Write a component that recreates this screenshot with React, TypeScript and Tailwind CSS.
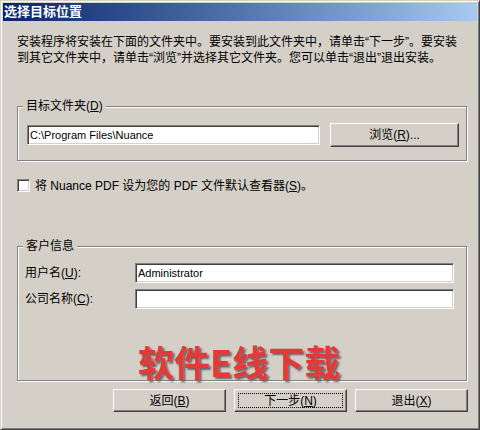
import React from "react";

const font = { fontFamily: '"Liberation Sans", "Noto Sans CJK SC", sans-serif' };

function Sunken({ className = "", children }: { className?: string; children?: React.ReactNode }) {
  return (
    <div
      className={
        "bg-white border border-t-[#808080] border-l-[#808080] border-r-white border-b-white shadow-[inset_1px_1px_0_#404040,inset_-1px_-1px_0_#d4d0c8] " +
        className
      }
    >
      {children}
    </div>
  );
}

function Button({ className = "", focused = false, children }: { className?: string; focused?: boolean; children?: React.ReactNode }) {
  return (
    <div
      className={
        "relative flex items-center justify-center bg-[#d4d0c8] border border-t-white border-l-white border-r-[#404040] border-b-[#404040] shadow-[inset_-1px_-1px_0_#808080] text-[12px] leading-[14px] text-black " +
        className
      }
    >
      {focused && <div className="absolute inset-[3px] border border-dotted border-black" />}
      <span className="relative">{children}</span>
    </div>
  );
}

function GroupBox({ label, className = "", children }: { label: React.ReactNode; className?: string; children?: React.ReactNode }) {
  return (
    <div
      className={
        "relative ml-[14px] w-[450px] border border-[#808080] shadow-[1px_1px_0_#ffffff,inset_1px_1px_0_#ffffff] " +
        className
      }
    >
      <span className="absolute left-[5px] -top-[8px] px-[3px] bg-[#d4d0c8] text-[12px] leading-[14px] text-black whitespace-nowrap">
        {label}
      </span>
      {children}
    </div>
  );
}

export default function App() {
  return (
    <div
      className="relative w-[480px] h-[430px] bg-[#d4d0c8] border border-t-[#d4d0c8] border-l-[#d4d0c8] border-r-[#404040] border-b-[#404040] shadow-[inset_1px_1px_0_#ffffff,inset_-1px_-1px_0_#808080] p-[2px] overflow-hidden"
      style={font}
    >
      {/* Title bar */}
      <div className="h-[18px] bg-gradient-to-r from-[#0a246a] to-[#a6caf0] flex items-center pl-[1px]">
        <span className="text-white font-bold text-[13px] leading-[16px] whitespace-nowrap">选择目标位置</span>
      </div>

      {/* Intro text */}
      <p className="mt-[13px] ml-[14px] text-[12px] leading-[16px] text-black whitespace-nowrap">
        安装程序将安装在下面的文件夹中。要安装到此文件夹中，请单击“下一步”。要安装
        <br />
        到其它文件夹中，请单击“浏览”并选择其它文件夹。您可以单击“退出”退出安装。
      </p>

      {/* Destination folder */}
      <GroupBox
        className="mt-[40px] h-[55px]"
        label={
          <>
            目标文件夹(<span className="underline">D</span>)
          </>
        }
      >
        <div className="flex items-center pl-[9px] pt-[16px]">
          <Sunken className="w-[293px] h-[20px] flex items-center px-[2px]">
            <span className="text-[11px] leading-[14px] text-black whitespace-nowrap">C:\Program Files\Nuance</span>
          </Sunken>
          <Button className="ml-[10px] w-[129px] h-[24px]">
            浏览(<span className="underline">R</span>)...
          </Button>
        </div>
      </GroupBox>

      {/* Checkbox */}
      <div className="mt-[18px] ml-[14px] flex items-center h-[13px]">
        <Sunken className="w-[13px] h-[13px] shrink-0" />
        <span className="ml-[5px] text-[12px] leading-[14px] text-black whitespace-nowrap">
          将 Nuance PDF 设为您的 PDF 文件默认查看器(<span className="underline">S</span>)。
        </span>
      </div>

      {/* Customer info */}
      <GroupBox className="mt-[54px] h-[135px]" label="客户信息">
        <div className="pl-[7px] pt-[16px] flex flex-col gap-[6px]">
          <div className="flex items-center">
            <span className="w-[110px] text-[12px] leading-[14px] text-black whitespace-nowrap">
              用户名(<span className="underline">U</span>):
            </span>
            <Sunken className="w-[319px] h-[20px] flex items-center px-[2px]">
              <span className="text-[11px] leading-[14px] text-black">Administrator</span>
            </Sunken>
          </div>
          <div className="flex items-center">
            <span className="w-[110px] text-[12px] leading-[14px] text-black whitespace-nowrap">
              公司名称(<span className="underline">C</span>):
            </span>
            <Sunken className="w-[319px] h-[20px]" />
          </div>
        </div>
      </GroupBox>

      {/* Buttons */}
      <div className="mt-[8px] ml-[110px] flex gap-[8px]">
        <Button className="w-[113px] h-[23px]">
          返回(<span className="underline">B</span>)
        </Button>
        <Button className="w-[113px] h-[23px]" focused>
          下一步(<span className="underline">N</span>)
        </Button>
        <Button className="w-[113px] h-[23px]">
          退出(<span className="underline">X</span>)
        </Button>
      </div>

      {/* Watermark overlay */}
      <div
        className="absolute left-[137px] top-[342px] text-[36px] leading-[36px] font-bold text-[#e23a3a] whitespace-nowrap [text-shadow:2px_2px_2px_#666]"
        style={{ fontFamily: '"Noto Sans CJK SC", sans-serif' }}
      >
        软件E线下载
      </div>
    </div>
  );
}
